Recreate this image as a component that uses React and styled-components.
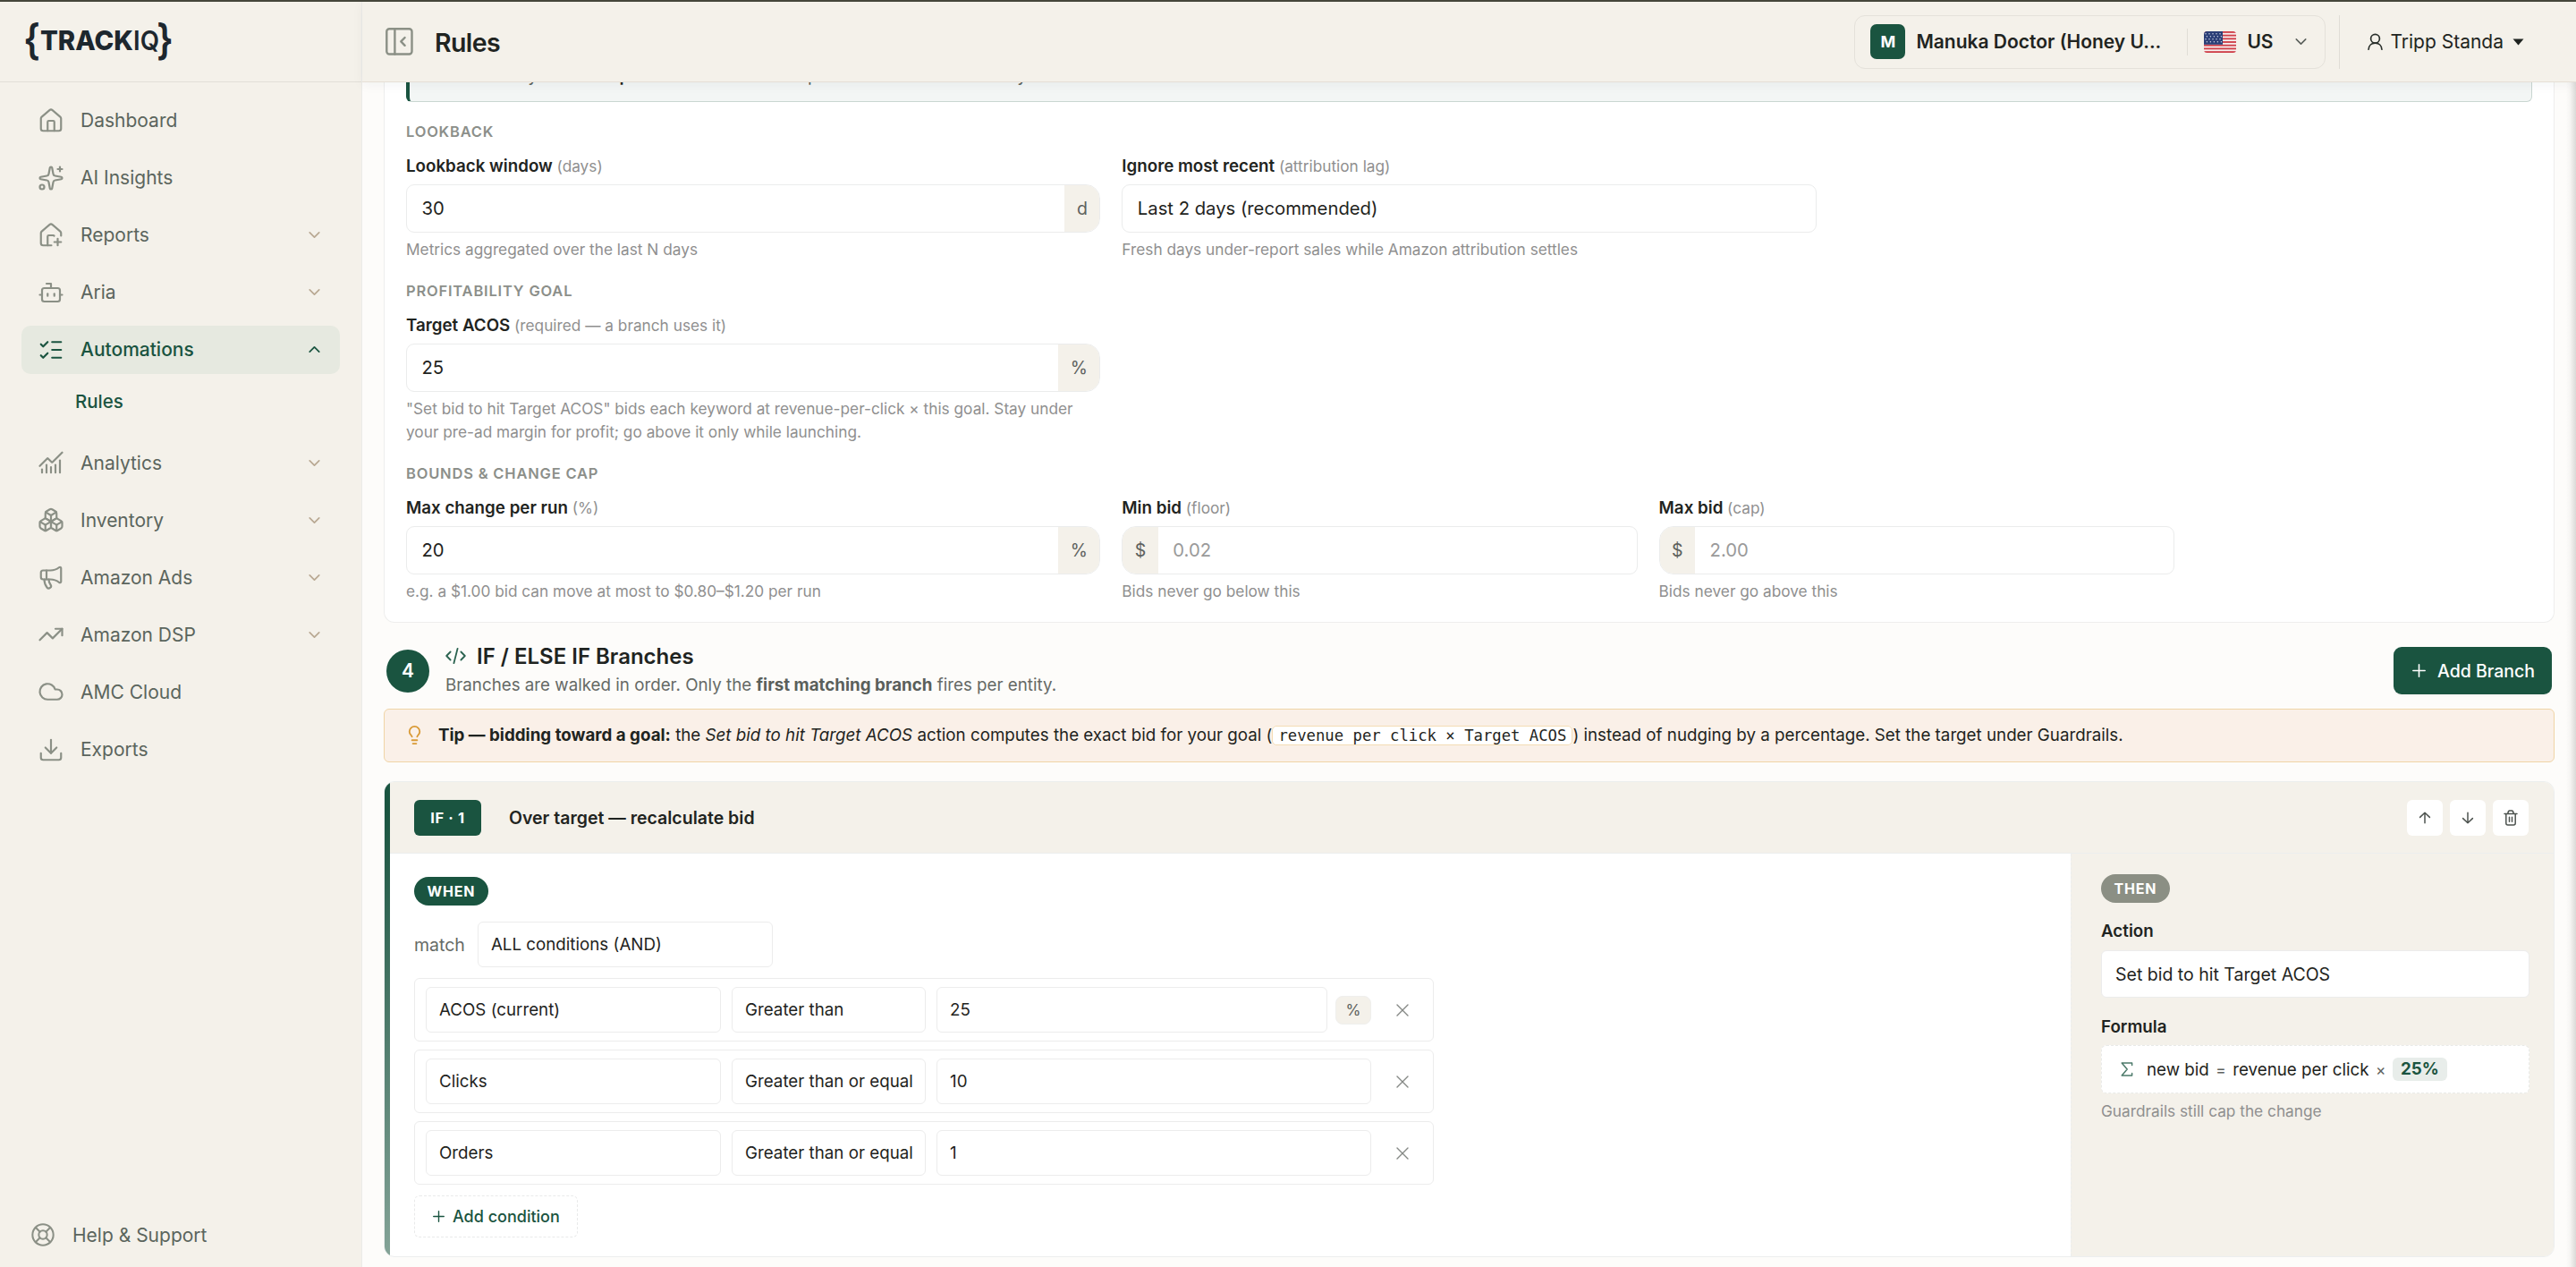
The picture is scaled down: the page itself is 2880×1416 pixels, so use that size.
import React, { useState } from 'react';
import styled, { createGlobalStyle } from 'styled-components';
import {
  House,
  Sparkles,
  HousePlus,
  Bot,
  ListChecks,
  ChartNoAxesCombined,
  Boxes,
  Megaphone,
  TrendingUp,
  Cloud,
  Download,
  LifeBuoy,
  ChevronDown,
  ChevronUp,
  Lightbulb,
} from 'lucide-react';

const GlobalStyle = createGlobalStyle`
  * {
    box-sizing: border-box;
  }

  body {
    margin: 0;
    font-family: Inter, 'Liberation Sans', sans-serif;
    color: #1f2421;
    background: #fdfcfa;
  }

  button, input {
    font-family: inherit;
  }
`;

const Page = styled.div`
  position: relative;
  display: grid;
  grid-template-columns: 405px 1fr;
  width: 2880px;
  height: 1416px;
  overflow: hidden;
  border-top: 2px solid #45463b;
`;

const WindowEdge = styled.div`
  position: absolute;
  top: 0;
  right: 0;
  bottom: 0;
  width: 11px;
  background: linear-gradient(to right, rgba(60, 60, 58, 0), rgba(60, 60, 58, 0.04) 40%, rgba(60, 60, 58, 0.18));
`;

/* ---------- sidebar ---------- */

const Sidebar = styled.aside`
  display: flex;
  flex-direction: column;
  background: #f4f1ea;
  border-right: 1px solid #ebebe8;
`;

const LogoBar = styled.div`
  height: 90px;
  padding: 12px 0 0 26px;
  border-bottom: 1px solid #e2dfd8;
`;

const Nav = styled.nav`
  flex: 1;
  display: flex;
  flex-direction: column;
  gap: 10.1px;
  padding: 15.5px 24px 0;
`;

const NavItem = styled.a`
  display: flex;
  align-items: center;
  gap: 18px;
  height: 54px;
  padding: 0 18px;
  border-radius: 10px;
  font-size: 21px;
  font-weight: ${({ $active }) => ($active ? 500 : 400)};
  color: ${({ $active }) => ($active ? '#1a5440' : '#5b655d')};
  background: ${({ $active }) => ($active ? '#e6e9e0' : 'transparent')};

  > svg:first-child {
    color: ${({ $active }) => ($active ? '#1a5440' : '#8b9086')};
  }

  > svg:last-child:not(:first-child) {
    color: ${({ $active }) => ($active ? '#1a5440' : '#b9a993')};
  }
`;

const NavLabel = styled.span`
  flex: 1;
`;

const SubItem = styled.a`
  height: 55px;
  margin-top: -3px;
  padding-left: 60px;
  line-height: 48px;
  font-size: 20.5px;
  font-weight: 500;
  color: #1a5440;
`;

const HelpLink = styled.a`
  display: flex;
  align-items: center;
  gap: 19px;
  height: 72px;
  padding-left: 34px;
  font-size: 21px;
  color: #5b655d;

  svg {
    color: #8b9086;
  }
`;

/* ---------- header ---------- */

const Main = styled.main`
  display: flex;
  flex-direction: column;
  min-width: 0;
  height: 1414px;
`;

const Header = styled.header`
  position: relative;
  z-index: 1;
  flex: none;
  display: flex;
  align-items: center;
  height: 90px;
  padding: 0 58px 0 26px;
  background: #f4f1ea;
  border-bottom: 1px solid #e6dfd6;
  box-shadow: 0 3px 12px rgba(20, 40, 60, 0.05);
`;

const PageTitle = styled.h1`
  flex: 1;
  margin: 2px 0 0 24px;
  font-size: 28.5px;
  font-weight: 600;
  letter-spacing: -0.6px;
`;

const AccountPicker = styled.div`
  display: flex;
  align-items: center;
  height: 60px;
  width: 527px;
  padding: 0 16px 0 17px;
  border: 1px solid #e4e1da;
  border-radius: 12px;
  font-size: 21px;
  font-weight: 600;
`;

const Avatar = styled.span`
  display: grid;
  place-items: center;
  width: 39px;
  height: 39px;
  margin-right: 12px;
  border-radius: 7px;
  background: #1a5440;
  color: #fff;
  font-size: 18px;
  font-weight: 700;
`;

const AccountName = styled.span`
  flex: 1;
  white-space: nowrap;
`;

const PickerDivider = styled.span`
  width: 1px;
  height: 30px;
  margin-right: 18px;
  background: #e0ddd6;
`;

const Country = styled.span`
  width: 50px;
  margin-left: 12px;
`;

const UserMenu = styled.div`
  display: flex;
  align-items: center;
  height: 60px;
  margin-left: 15px;
  padding-left: 31px;
  border-left: 1px solid #e0ddd6;
  font-size: 21px;

  span {
    margin: 0 10px 0 8px;
  }
`;

/* ---------- content ---------- */

const Content = styled.div`
  flex: 1;
  min-height: 0;
  overflow: hidden;
  padding: 0 24px;
  background: #fdfcfa;
`;

const Card = styled.section`
  height: 604px;
  padding: 0 24px;
  background: #fff;
  border: 1px solid #eeeeed;
  border-top: none;
  border-radius: 0 0 12px 12px;
`;

const Notice = styled.div`
  flex: none;
  height: 60px;
  margin: 0 0 20px;
  padding: 14px 0 0 45px;
  border: 1px solid #c9d6d1;
  border-left: 4px solid #1a5440;
  border-radius: 6px;
  background: #f3f6f5;
  font-size: 19.5px;
  line-height: 30px;
  color: #5a605c;

  b {
    color: #1f2421;
    font-weight: 600;
  }
`;

const NoticeClip = styled.div`
  display: flex;
  flex-direction: column;
  justify-content: flex-end;
  height: 42px;
`;

const GroupTitle = styled.h4`
  height: 26px;
  margin: 0 0 13px;
  line-height: 26px;
  font-size: 16.5px;
  font-weight: 600;
  letter-spacing: 0.8px;
  text-transform: uppercase;
  color: #8c8f8a;
`;

const Fields = styled.div`
  display: grid;
  grid-template-columns: repeat(24, 1fr);
  margin: 0 -12px 20px;
`;

const Field = styled.div`
  grid-column: span ${({ $span }) => $span};
  padding: 0 12px;
`;

const FieldLabel = styled.label`
  display: block;
  height: 27px;
  margin-bottom: 6px;
  line-height: 26.5px;
  font-size: 18.75px;
  font-weight: 600;

  small {
    font-size: 17.25px;
    font-weight: 400;
    color: #8f8f8f;
  }
`;

const InputGroup = styled.div`
  display: flex;
  height: 53.5px;
  border: 1px solid #ebecec;
  border-radius: ${({ $left, $right }) => `${$left ? 16 : 9}px ${$right ? 16 : 9}px ${$right ? 16 : 9}px ${$left ? 16 : 9}px`};
  overflow: hidden;
`;

const FieldInput = styled.input`
  flex: 1;
  min-width: 0;
  padding: 0 16.5px;
  border: none;
  outline: none;
  background: transparent;
  font-size: 20.25px;
  color: #1f2421;

  &::placeholder {
    color: #9a9a9a;
  }
`;

const Addon = styled.span`
  display: grid;
  place-items: center;
  padding: 0 13.5px;
  background: #f4f1ea;
  font-size: 19.5px;
  color: #5e625e;
`;

const Hint = styled.p`
  margin: 6.5px 0 0;
  line-height: 26px;
  font-size: 17.25px;
  color: #8f8f8f;
`;

const StepRow = styled.div`
  display: flex;
  align-items: center;
  height: 96px;
  padding: 11px 3px 0;
`;

const StepNumber = styled.div`
  display: grid;
  place-items: center;
  width: 48px;
  height: 48px;
  margin-right: 18px;
  border-radius: 50%;
  background: #1a5440;
  color: #fff;
  font-size: 21px;
  font-weight: 600;
`;

const StepText = styled.div`
  flex: 1;
  padding-bottom: 3px;
`;

const StepTitle = styled.h2`
  display: flex;
  align-items: center;
  gap: 12px;
  margin: -1px 0 1px;
  height: 36px;
  font-size: 24px;
  font-weight: 600;
`;

const StepSub = styled.p`
  margin: 0;
  line-height: 28px;
  font-size: 18.75px;
  color: #666a66;

  b {
    font-weight: 700;
    color: #5a5f5b;
  }
`;

const AddBranch = styled.button`
  display: flex;
  align-items: center;
  justify-content: center;
  gap: 13px;
  width: 177px;
  height: 53px;
  padding: 0 0 0 2px;
  border: none;
  border-radius: 9px;
  background: #1a5440;
  color: #fff;
  font-size: 19.5px;
  font-weight: 500;
  box-shadow: 0 2px 2px rgba(0, 0, 0, 0.03);
`;

const Tip = styled.div`
  display: flex;
  align-items: center;
  height: 60px;
  padding: 0 0 1px 22px;
  border: 1px solid #f0d4a6;
  border-radius: 6px;
  background: #faf0e8;
  font-size: 18.75px;
  white-space: nowrap;

  svg {
    margin-right: 15px;
    color: #d99a36;
  }
`;

const Code = styled.code`
  padding: 0 6px;
  border: 1px solid #f4dcb4;
  border-radius: 5px;
  background: #fff;
  font-family: 'DejaVu Sans Mono', monospace;
  font-size: 17.25px;
`;

/* ---------- branch ---------- */

const Branch = styled.section`
  display: grid;
  grid-template-columns: 6px 1fr;
  height: 532px;
  margin-top: 21px;
  border: 1px solid #eceeee;
  border-radius: 12px;
  overflow: hidden;
  background: #fff;
`;

const BranchBar = styled.div`
  background: linear-gradient(to bottom, #1a5440, #1a5440 6%, #84a397);
`;

const BranchInner = styled.div`
  display: flex;
  flex-direction: column;
  min-width: 0;
`;

const BranchHead = styled.div`
  display: flex;
  align-items: center;
  height: 80px;
  padding: 0 28px 0 27px;
  background: #f4f1ea;
  border-bottom: 1px solid #eceeee;
`;

const BranchTag = styled.span`
  display: grid;
  place-items: center;
  width: 75px;
  height: 40px;
  margin-right: 31px;
  border-radius: 6px;
  background: #1a5440;
  color: #fff;
  font-size: 16.5px;
  font-weight: 700;
  letter-spacing: 0.6px;
`;

const BranchName = styled.span`
  flex: 1;
  font-size: 19.5px;
  font-weight: 600;
`;

const IconButtons = styled.div`
  display: flex;
  gap: 8px;
`;

const IconButton = styled.button`
  display: grid;
  place-items: center;
  width: 40px;
  height: 40px;
  padding: 0;
  border: none;
  border-radius: 6px;
  background: #fff;
  color: #4d534f;
`;

const BranchBody = styled.div`
  flex: 1;
  display: grid;
  grid-template-columns: 1fr 540px;
`;

const WhenPane = styled.div`
  padding: 26px 27px 0;
`;

const ThenPane = styled.div`
  padding: 23px 27px 0 33px;
  border-left: 1px dashed #eceeee;
  background: #f4f1ea;
`;

const Pill = styled.div`
  display: flex;
  align-items: center;
  width: fit-content;
  height: 32px;
  padding: 0 14.5px;
  border-radius: 16px;
  background: ${({ $muted }) => ($muted ? '#8b8f84' : '#1a5440')};
  color: #fff;
  font-size: 16px;
  font-weight: 700;
  letter-spacing: 0.8px;
`;

const MatchRow = styled.div`
  display: flex;
  align-items: center;
  gap: 14px;
  margin: 18px 0 12px;
  font-size: 19.5px;
  color: #666a66;
`;

const SelectBox = styled.div`
  display: flex;
  align-items: center;
  width: ${({ $width }) => $width};
  flex: ${({ $grow }) => ($grow ? 1 : 'none')};
  height: ${({ $large }) => ($large ? 53 : 51)}px;
  padding: 0 ${({ $large }) => ($large ? 15 : 14)}px;
  border: 1px solid #ececec;
  border-radius: 6px;
  background: #fff;
  font-size: ${({ $large }) => ($large ? 19.5 : 18.75)}px;
  color: #1f2421;
  white-space: nowrap;
`;

const Condition = styled.div`
  display: flex;
  align-items: center;
  width: 1140px;
  height: 71px;
  margin-bottom: 9px;
  padding: 0 12px;
  border: 1px solid #ececec;
  border-radius: 6px;
`;

const ConditionParts = styled.div`
  display: flex;
  align-items: center;
  gap: 12px;
  width: 1057px;
`;

const ValueWrap = styled.div`
  flex: 1;
  display: flex;
  align-items: center;
  gap: 9px;
`;

const Unit = styled.span`
  display: grid;
  place-items: center;
  width: 40px;
  height: 32px;
  border: 1px solid #efefed;
  border-radius: 8px;
  background: #f4f1ea;
  font-size: 17.25px;
  color: #5e625e;
`;

const RemoveButton = styled.button`
  display: grid;
  place-items: center;
  flex: 1;
  padding: 0 0 0 12px;
  border: none;
  background: none;
  color: #858885;
`;

const AddCondition = styled.button`
  display: flex;
  align-items: center;
  gap: 9px;
  height: 47px;
  margin-top: 12px;
  padding: 0 19px 0 20px;
  border: 1px dashed #e9eaea;
  border-radius: 6px;
  background: #fff;
  color: #1a5440;
  font-size: 18px;
  font-weight: 500;
`;

const ActionLabel = styled.div`
  height: 27px;
  margin: ${({ $top }) => $top}px 0 8px;
  line-height: 27px;
  font-size: 18.75px;
  font-weight: 600;
`;

const Formula = styled.div`
  display: flex;
  align-items: center;
  height: 54px;
  margin-top: -1px;
  padding: 0 21px;
  border: 1px dashed #e9eae8;
  border-radius: 6px;
  background: #fff;
  font-size: 18.75px;

  svg {
    margin-right: 15px;
    color: #4c7a6a;
  }

  i {
    margin: 0 7.5px;
    font-style: normal;
    font-size: 17.25px;
    color: #5e625e;
  }

  b {
    height: 26px;
    padding: 0 9px;
    border-radius: 6px;
    background: #e8edea;
    color: #1a5440;
    font-weight: 700;
    line-height: 26px;
  }
`;

/* ---------- drawings ---------- */

const LogoSvg = styled.svg`
  display: block;
  overflow: visible;
`;

function Logo() {
  return (
    <LogoSvg width="172" height="64" viewBox="0 0 172 64" fill="#1d272e" fontFamily="Inter, sans-serif">
      <text x="0" y="47" fontSize="47" fontWeight="600" textLength="19" lengthAdjust="spacingAndGlyphs">{'{'}</text>
      <text x="19" y="41.5" fontSize="30.5" fontWeight="800" textLength="104" lengthAdjust="spacingAndGlyphs">TRACK</text>
      <text x="123" y="41.5" fontSize="30.5" fontWeight="600" textLength="29" lengthAdjust="spacingAndGlyphs">IQ</text>
      <text x="149" y="47" fontSize="47" fontWeight="600" textLength="19" lengthAdjust="spacingAndGlyphs">{'}'}</text>
    </LogoSvg>
  );
}

function CollapseIcon() {
  return (
    <svg width="31" height="31" viewBox="0 0 31 31" fill="none" stroke="#8b9086" strokeWidth="2.4" strokeLinecap="round" strokeLinejoin="round">
      <rect x="1.3" y="1.3" width="28.2" height="28.2" rx="3" />
      <path d="M10.4 1.3v28.2M21.6 11l-4.3 4.4 4.3 4.4" />
    </svg>
  );
}

function Flag() {
  const stripes = [0, 2, 4, 6, 8, 10, 12];
  return (
    <svg width="36" height="24" viewBox="0 0 36 24">
      <clipPath id="flag">
        <rect width="36" height="24" rx="3.5" />
      </clipPath>
      <g clipPath="url(#flag)">
        <rect width="36" height="24" fill="#f6f0ee" />
        {stripes.map((n) => (
          <rect key={n} y={n * 1.846} width="36" height="1.846" fill="#cf3f49" />
        ))}
        <rect width="21" height="14.8" fill="#2b3f77" />
        {[2, 5, 8, 11].map((y, row) =>
          [2, 6, 10, 14, 18].map((x) => (
            <circle key={`${x}-${y}`} cx={x + (row % 2) * 1.4} cy={y + 0.8} r="0.75" fill="#cdd3e4" />
          ))
        )}
      </g>
    </svg>
  );
}

function UserIcon() {
  return (
    <svg width="17" height="20" viewBox="0 0 17 20" fill="none" stroke="#2a302c" strokeWidth="1.7" strokeLinecap="round">
      <circle cx="8.5" cy="6.2" r="4.9" />
      <path d="M1.1 18.2c.2-4.3 3.3-7.1 7.4-7.1s7.2 2.8 7.4 7.1" />
    </svg>
  );
}

function CodeIcon() {
  return (
    <svg width="23" height="20" viewBox="0 0 23 20" fill="none" stroke="#2b6350" strokeWidth="1.8" strokeLinecap="round" strokeLinejoin="round">
      <path d="M5.6 5.5L1.2 10l4.4 4.5M17.4 5.5l4.4 4.5-4.4 4.5M13.6 1.8L9.4 18.2" />
    </svg>
  );
}

function PlusIcon({ size = 14 }) {
  return (
    <svg width={size} height={size} viewBox="0 0 14 14" fill="none" stroke="currentColor" strokeWidth="1.5" strokeLinecap="round">
      <path d="M7 .8v12.4M.8 7h12.4" />
    </svg>
  );
}

function CloseIcon() {
  return (
    <svg width="14" height="14" viewBox="0 0 14 14" fill="none" stroke="currentColor" strokeWidth="1.4" strokeLinecap="round">
      <path d="M1 1l12 12M13 1L1 13" />
    </svg>
  );
}

function ArrowIcon({ down }) {
  return (
    <svg width="14" height="14" viewBox="0 0 14 14" fill="none" stroke="currentColor" strokeWidth="1.5" strokeLinecap="round" strokeLinejoin="round">
      <path d={down ? 'M7 1.2v11.6M1.6 7.6L7 12.8l5.4-5.2' : 'M7 12.8V1.2M1.6 6.4L7 1.2l5.4 5.2'} />
    </svg>
  );
}

function TrashIcon() {
  return (
    <svg width="16" height="18" viewBox="0 0 16 18" fill="none" stroke="currentColor" strokeWidth="1.5" strokeLinecap="round" strokeLinejoin="round">
      <path d="M1 4.4h14M2.8 4.4V15q0 2 2 2h6.4q2 0 2-2V4.4M4.8 4.400q.3-3.200 2-3.300h2.400q1.700.1 2 3.300M6.500 8.200v5M9.500 8.200v5" />
    </svg>
  );
}

function SigmaIcon() {
  return (
    <svg width="14" height="16" viewBox="0 0 14 16" fill="none" stroke="currentColor" strokeWidth="1.5" strokeLinecap="round" strokeLinejoin="round">
      <path d="M12.6 3.4V1H1.2l6 7-6 7h11.4v-2.4" />
    </svg>
  );
}

/* ---------- data ---------- */

const navItems = [
  { label: 'Dashboard', icon: House },
  { label: 'AI Insights', icon: Sparkles },
  { label: 'Reports', icon: HousePlus, more: true },
  { label: 'Aria', icon: Bot, more: true },
  { label: 'Automations', icon: ListChecks, more: true, active: true, children: ['Rules'] },
  { label: 'Analytics', icon: ChartNoAxesCombined, more: true },
  { label: 'Inventory', icon: Boxes, more: true },
  { label: 'Amazon Ads', icon: Megaphone, more: true },
  { label: 'Amazon DSP', icon: TrendingUp, more: true },
  { label: 'AMC Cloud', icon: Cloud },
  { label: 'Exports', icon: Download },
];

const initialConditions = [
  { metric: 'ACOS (current)', op: 'Greater than', value: '25', unit: '%' },
  { metric: 'Clicks', op: 'Greater than or equal', value: '10' },
  { metric: 'Orders', op: 'Greater than or equal', value: '1' },
];

function GuardField({ span, label, note, value, placeholder, prefix, suffix, hint }) {
  return (
    <Field $span={span}>
      <FieldLabel>
        {label} <small>({note})</small>
      </FieldLabel>
      <InputGroup $left={prefix} $right={suffix}>
        {prefix && <Addon>{prefix}</Addon>}
        <FieldInput defaultValue={value} placeholder={placeholder} />
        {suffix && <Addon>{suffix}</Addon>}
      </InputGroup>
      <Hint>{hint}</Hint>
    </Field>
  );
}

function App() {
  const [conditions, setConditions] = useState(initialConditions);

  const removeCondition = (index) => {
    setConditions(conditions.filter((c, i) => i !== index));
  };

  const addCondition = () => {
    setConditions([...conditions, { metric: 'Clicks', op: 'Greater than', value: '0' }]);
  };

  return (
    <>
      <GlobalStyle />
      <Page>
        <Sidebar>
          <LogoBar>
            <Logo />
          </LogoBar>
          <Nav>
            {navItems.map(({ label, icon: Icon, more, active, children }) => (
              <React.Fragment key={label}>
                <NavItem $active={active}>
                  <Icon size={30} strokeWidth={1.75} />
                  <NavLabel>{label}</NavLabel>
                  {more && (active ? <ChevronUp size={21} /> : <ChevronDown size={21} />)}
                </NavItem>
                {children && children.map((child) => <SubItem key={child}>{child}</SubItem>)}
              </React.Fragment>
            ))}
          </Nav>
          <HelpLink>
            <LifeBuoy size={28} strokeWidth={1.75} />
            Help &amp; Support
          </HelpLink>
        </Sidebar>

        <Main>
          <Header>
            <CollapseIcon />
            <PageTitle>Rules</PageTitle>
            <AccountPicker>
              <Avatar>M</Avatar>
              <AccountName>Manuka Doctor (Honey U...</AccountName>
              <PickerDivider />
              <Flag />
              <Country>US</Country>
              <ChevronDown size={21} strokeWidth={1.75} color="#5a5f5b" />
            </AccountPicker>
            <UserMenu>
              <UserIcon />
              <span>Tripp Standa</span>
              <svg width="13" height="8" viewBox="0 0 13 8" fill="#1f2421">
                <path d="M.5.5h12L6.5 7.5z" />
              </svg>
            </UserMenu>
          </Header>

          <Content>
            <Card>
              <NoticeClip>
                <Notice>
                  Limits may be set to <b>protect</b> bids that will dip after a few slow sale days
                </Notice>
              </NoticeClip>

              <GroupTitle>Lookback</GroupTitle>
              <Fields>
                <GuardField span={8} label="Lookback window" note="days" value="30" suffix="d" hint="Metrics aggregated over the last N days" />
                <GuardField
                  span={8}
                  label="Ignore most recent"
                  note="attribution lag"
                  value="Last 2 days (recommended)"
                  hint="Fresh days under-report sales while Amazon attribution settles"
                />
              </Fields>

              <GroupTitle>Profitability goal</GroupTitle>
              <Fields>
                <GuardField
                  span={8}
                  label="Target ACOS"
                  note="required — a branch uses it"
                  value="25"
                  suffix="%"
                  hint={'"Set bid to hit Target ACOS" bids each keyword at revenue-per-click × this goal. Stay under your pre-ad margin for profit; go above it only while launching.'}
                />
              </Fields>

              <GroupTitle>Bounds &amp; change cap</GroupTitle>
              <Fields>
                <GuardField span={8} label="Max change per run" note="%" value="20" suffix="%" hint="e.g. a $1.00 bid can move at most to $0.80–$1.20 per run" />
                <GuardField span={6} label="Min bid" note="floor" placeholder="0.02" prefix="$" hint="Bids never go below this" />
                <GuardField span={6} label="Max bid" note="cap" placeholder="2.00" prefix="$" hint="Bids never go above this" />
              </Fields>
            </Card>

            <StepRow>
              <StepNumber>4</StepNumber>
              <StepText>
                <StepTitle>
                  <CodeIcon />
                  IF / ELSE IF Branches
                </StepTitle>
                <StepSub>
                  Branches are walked in order. Only the <b>first matching branch</b> fires per entity.
                </StepSub>
              </StepText>
              <AddBranch>
                <PlusIcon size={15} />
                Add Branch
              </AddBranch>
            </StepRow>

            <Tip>
              <Lightbulb size={23} strokeWidth={1.9} />
              <span>
                <b>Tip — bidding toward a goal:</b> the <em>Set bid to hit Target ACOS</em> action computes the exact bid for your goal (
                <Code>revenue per click × Target ACOS</Code>) instead of nudging by a percentage. Set the target under Guardrails.
              </span>
            </Tip>

            <Branch>
              <BranchBar />
              <BranchInner>
                <BranchHead>
                  <BranchTag>IF · 1</BranchTag>
                  <BranchName>Over target — recalculate bid</BranchName>
                  <IconButtons>
                    <IconButton><ArrowIcon /></IconButton>
                    <IconButton><ArrowIcon down /></IconButton>
                    <IconButton><TrashIcon /></IconButton>
                  </IconButtons>
                </BranchHead>
                <BranchBody>
                  <WhenPane>
                    <Pill>WHEN</Pill>
                    <MatchRow>
                      match
                      <SelectBox $width="330px">ALL conditions (AND)</SelectBox>
                    </MatchRow>
                    {conditions.map((condition, index) => (
                      <Condition key={index}>
                        <ConditionParts>
                          <SelectBox $width="330px">{condition.metric}</SelectBox>
                          <SelectBox $width="217px">{condition.op}</SelectBox>
                          <ValueWrap>
                            <SelectBox $grow>{condition.value}</SelectBox>
                            {condition.unit && <Unit>{condition.unit}</Unit>}
                          </ValueWrap>
                        </ConditionParts>
                        <RemoveButton onClick={() => removeCondition(index)}>
                          <CloseIcon />
                        </RemoveButton>
                      </Condition>
                    ))}
                    <AddCondition onClick={addCondition}>
                      <PlusIcon size={13} />
                      Add condition
                    </AddCondition>
                  </WhenPane>
                  <ThenPane>
                    <Pill $muted>THEN</Pill>
                    <ActionLabel $top={18}>Action</ActionLabel>
                    <SelectBox $large>Set bid to hit Target ACOS</SelectBox>
                    <ActionLabel $top={19}>Formula</ActionLabel>
                    <Formula>
                      <SigmaIcon />
                      new bid <i>=</i> revenue per click <i>×</i> <b>25%</b>
                    </Formula>
                    <Hint>Guardrails still cap the change</Hint>
                  </ThenPane>
                </BranchBody>
              </BranchInner>
            </Branch>
          </Content>
        </Main>
        <WindowEdge />
      </Page>
    </>
  );
}

export default App;
